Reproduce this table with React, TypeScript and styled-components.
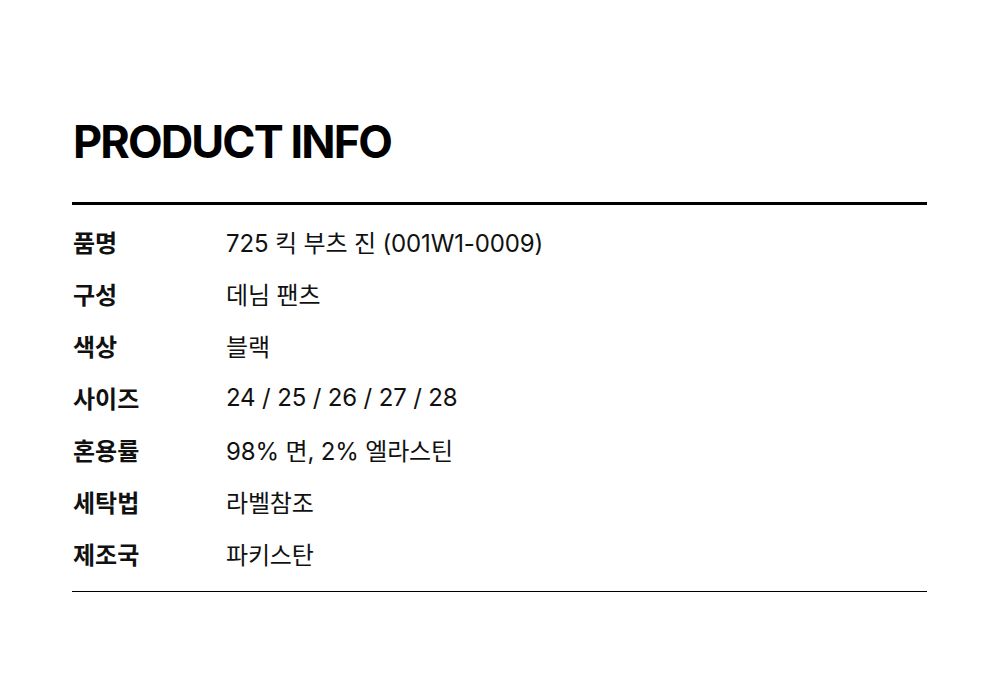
import styled, { createGlobalStyle } from "styled-components";

const GlobalStyle = createGlobalStyle`
    html, body {
        margin: 0;
        padding: 0;
        background: #ffffff;
    }
    body {
        font-family: Inter, "Noto Sans CJK KR", sans-serif;
        color: #111111;
    }
`;

const rows = [
    { label: "품명", value: "725 킥 부츠 진 (001W1-0009)" },
    { label: "구성", value: "데님 팬츠" },
    { label: "색상", value: "블랙" },
    { label: "사이즈", value: "24 / 25 / 26 / 27 / 28" },
    { label: "혼용률", value: "98% 면, 2% 엘라스틴" },
    { label: "세탁법", value: "라벨참조" },
    { label: "제조국", value: "파키스탄" },
];

export default function App() {
    return (
        <>
            <GlobalStyle />
            <Page>
                <Title>PRODUCT INFO</Title>
                <InfoTable>
                    {rows.map((row) => (
                        <InfoRow key={row.label}>
                            <Label>{row.label}</Label>
                            <Value>{row.value}</Value>
                        </InfoRow>
                    ))}
                </InfoTable>
            </Page>
        </>
    );
}

const Page = styled.div`
    width: 999px;
    height: 689px;
    box-sizing: border-box;
    padding: 112px 72px 0 72px;
`;

const Title = styled.h1`
    margin: 0 0 0 1px;
    font-family: Inter, "Noto Sans CJK KR", sans-serif;
    font-size: 45px;
    font-weight: 700;
    line-height: 60px;
    letter-spacing: -1.9px;
    color: #000000;
`;

const InfoTable = styled.div`
    margin-top: 30px;
    border-top: 3px solid #000000;
    border-bottom: 1px solid #000000;
    padding: 10px 0 12px 0;
    display: flex;
    flex-direction: column;
`;

const InfoRow = styled.div`
    display: flex;
    align-items: center;
    height: 52px;
`;

const Label = styled.div`
    width: 153px;
    padding-left: 1px;
    font-family: "Noto Sans CJK KR", sans-serif;
    font-size: 24px;
    font-weight: 700;
    color: #111111;
`;

const Value = styled.div`
    font-family: Inter, "Noto Sans CJK KR", sans-serif;
    font-size: 24px;
    font-weight: 400;
    letter-spacing: -0.15px;
    color: #111111;
`;
